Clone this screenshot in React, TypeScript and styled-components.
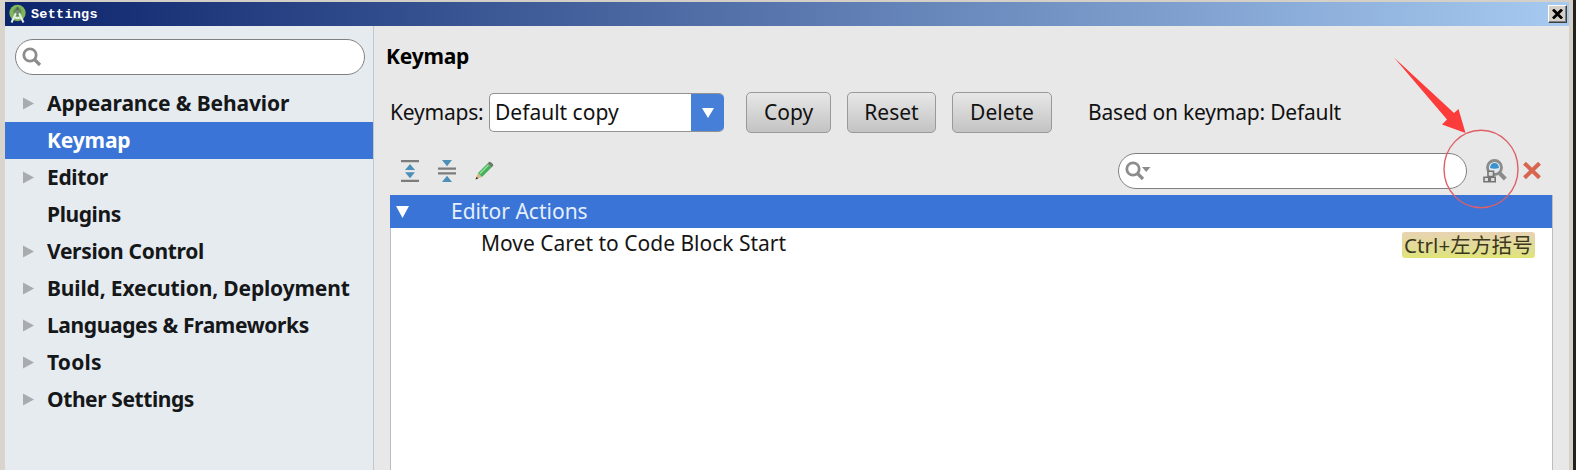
import React from "react";
import styled, { createGlobalStyle } from "styled-components";

const GlobalStyle = createGlobalStyle`
  *, *::before, *::after { box-sizing: border-box; }
  body { margin: 0; overflow: hidden; }
`;

const Frame = styled.div`
  width: 1576px;
  height: 470px;
  display: flex;
  flex-direction: column;
  padding-top: 2px;
  border-left: 5px solid #d9d5cc;
  border-right: 3px solid #24201e;
  background: #d4d0c8;
  font-family: "Noto Sans", "Noto Sans CJK SC", sans-serif;
  font-size: 21px;
  color: #111;
  position: relative;
  overflow: hidden;
`;

const TitleBar = styled.header`
  height: 24px;
  flex: none;
  margin-right: 4px;
  display: flex;
  align-items: center;
  padding: 0 2px 0 4px;
  background: linear-gradient(90deg, #0c246c 0%, #a6caf0 100%);
`;

const TitleText = styled.span`
  flex: 1;
  margin-left: 5px;
  padding-top: 1px;
  color: #fff;
  font: bold 13.5px/20px "Liberation Mono", monospace;
  letter-spacing: 0.25px;
`;

const CloseButton = styled.button`
  width: 19px;
  height: 18px;
  padding: 0;
  display: grid;
  place-items: center;
  background: #d4d0c8;
  border: 1px solid;
  border-color: #fff #404040 #404040 #fff;
  box-shadow: inset -1px -1px #808080;
`;

const Body = styled.div`
  flex: 1;
  min-height: 0;
  display: flex;
  margin-right: 4px;
  background: #e8e8e8;
`;

const Sidebar = styled.nav`
  width: 369px;
  flex: none;
  padding-top: 13px;
  background: #e6ebf0;
  border-right: 1px solid #c3c6ca;
`;

const SearchField = styled.div<{ $width: number }>`
  width: ${(p) => p.$width}px;
  height: 36px;
  display: flex;
  align-items: center;
  padding-left: 6px;
  background: #fff;
  border: 1.5px solid #808080;
  border-radius: 18px;
`;

const SidebarSearch = styled.div`
  padding-left: 10px;
  margin-bottom: 10.3px;
`;

const NavRow = styled.div<{ $active?: boolean; $spacing: number }>`
  height: 37.08px;
  display: flex;
  align-items: center;
  padding: 0 0 1.2px 17px;
  font-weight: 700;
  font-size: 21px;
  line-height: 35px;
  letter-spacing: ${(p) => p.$spacing}px;
  white-space: nowrap;
  color: ${(p) => (p.$active ? "#fff" : "#151719")};
  background: ${(p) => (p.$active ? "#3974d6" : "transparent")};
`;

const NavMarker = styled.span`
  width: 25px;
  display: flex;
`;

const Main = styled.main`
  flex: 1;
  min-width: 0;
  display: flex;
  flex-direction: column;
  padding: 13px 16px 0 13px;
`;

const Heading = styled.h1`
  margin: 0 0 0 -1px;
  height: 34px;
  font-size: 21px;
  line-height: 34px;
  font-weight: 700;
  letter-spacing: -0.2px;
  color: #000;
`;

const SchemeRow = styled.div`
  height: 41px;
  margin-top: 19px;
  display: flex;
  align-items: center;
`;

const Label = styled.span<{ $width: number; $spacing: number }>`
  width: ${(p) => p.$width}px;
  padding: 0 0 2px 3px;
  white-space: nowrap;
  line-height: 36px;
  letter-spacing: ${(p) => p.$spacing}px;
`;

const Combo = styled.div`
  width: 235px;
  height: 39px;
  margin-right: 22px;
  display: flex;
  border: 1px solid #929292;
  border-right: none;
  border-radius: 5px;
  background: #fff;
  overflow: hidden;
`;

const ComboValue = styled.span`
  flex: 1;
  padding-left: 5px;
  line-height: 37px;
`;

const ComboArrow = styled.span`
  width: 33px;
  margin: -1px 0;
  display: grid;
  place-items: center;
  background: #467fd8;
`;

const Button = styled.button<{ $width: number; $spacing?: number }>`
  width: ${(p) => p.$width}px;
  height: 41px;
  margin-right: 16px;
  padding: 0 0 2px;
  font: inherit;
  line-height: 36px;
  letter-spacing: ${(p) => p.$spacing ?? 0}px;
  color: #111;
  border: 1.5px solid #999;
  border-radius: 5px;
  background: linear-gradient(#e7e7e7, #c3c3c3);
`;

const Toolbar = styled.div`
  height: 62px;
  display: flex;
  align-items: center;
  padding: 13px 12px 0 14px;
`;

const ToolIcon = styled.span<{ $gap: number }>`
  display: flex;
  margin-right: ${(p) => p.$gap}px;
`;

const Spacer = styled.span`
  flex: 1;
`;

const ToolbarSearch = styled.div`
  margin-right: 16px;
  padding-top: 1px;
`;

const Tree = styled.div`
  flex: 1;
  margin-left: 3px;
  background: #fff;
  border: 1px solid #b9bec6;
  border-bottom: none;
`;

const TreeRow = styled.div<{ $selected?: boolean }>`
  height: 33px;
  display: flex;
  align-items: center;
  padding: 0 17px 0 ${(p) => (p.$selected ? 6 : 90)}px;
  margin: ${(p) => (p.$selected ? "-1px 0 0 -1px" : "0")};
  color: ${(p) => (p.$selected ? "#e6efff" : "#151515")};
  background: ${(p) => (p.$selected ? "#3974d6" : "#fff")};
`;

const TreeText = styled.span<{ $indent: number; $up?: boolean }>`
  flex: 1;
  margin-left: ${(p) => p.$indent}px;
  padding-bottom: ${(p) => (p.$up ? 2 : 0)}px;
  line-height: 31px;
`;

const Shortcut = styled.kbd`
  width: 133px;
  height: 26px;
  padding-left: 2px;
  font: 20.5px/26px "Noto Sans", "Noto Sans CJK SC", sans-serif;
  letter-spacing: 0.1px;
  white-space: nowrap;
  color: #3b371d;
  border-radius: 3px;
  background: linear-gradient(#e8d3b2, #dfe08a 80%, #e3e576);
`;

const Annotation = styled.svg`
  position: absolute;
  left: 1380px;
  top: 50px;
`;

const Chevron = () => (
  <svg width="12" height="13" viewBox="0 0 12 13">
    <path d="M1 0.5 12 6.5 1 12.5Z" fill="#a9acae" />
  </svg>
);

const DownTriangle = ({ w, h }: { w: number; h: number }) => (
  <svg width={w} height={h} viewBox="0 0 12 12" preserveAspectRatio="none">
    <path d="M0 0H12L6 12Z" fill="#fff" />
  </svg>
);

const Magnifier = ({ menu }: { menu?: boolean }) => (
  <svg width="28" height="20" viewBox="0 0 28 20" fill="none" stroke="#8c8c8c">
    <circle cx="8" cy="8" r="6.2" strokeWidth="2.8" />
    <path d="M12.5 12.5 18 18" strokeWidth="3.2" />
    {menu && <path d="M17 6H25.5L21.2 11Z" fill="#8c8c8c" stroke="none" />}
  </svg>
);

const AppLogo = () => (
  <svg width="17" height="20" viewBox="0 0 17 20">
    <circle cx="8.5" cy="9" r="8.2" fill="#7eb65a" />
    <circle cx="8.5" cy="8" r="4" fill="#5f8c55" />
    <path d="M8.5 3V7" stroke="#536158" strokeWidth="2" />
    <path d="M7 9 2.5 18.5M10 9 14.5 18.5M4.5 12.5Q8.5 16 12.5 12.5" fill="none" stroke="#e4ece5" strokeWidth="2" />
    <circle cx="8.5" cy="8" r="2" fill="#798a7a" />
  </svg>
);

const ExpandAll = () => (
  <svg width="18" height="22" viewBox="0 0 18 22">
    <path d="M0 1.2H18M0 20.8H18" stroke="#7c7c7c" strokeWidth="2.2" />
    <path d="M9 4 14 10H4ZM9 18.3 14 12.3H4Z" fill="#4e8fb7" />
  </svg>
);

const CollapseAll = () => (
  <svg width="18" height="22" viewBox="0 0 18 22">
    <path d="M0 8.6H18M0 13.4H18" stroke="#7c7c7c" strokeWidth="2.2" />
    <path d="M4 0H14L9 6.2ZM4 22H14L9 15.8Z" fill="#4e8fb7" />
  </svg>
);

const Pencil = () => (
  <svg width="19" height="19" viewBox="0 0 19 19">
    <path d="M0.5 18.5 3 12 7 16Z" fill="#d9b989" />
    <path d="M0.5 18.5 1.5 15.8 3.3 17.5Z" fill="#333" />
    <path d="M3 12 12.5 2.5 16.5 6.5 7 16Z" fill="#44b05c" />
    <path d="M4.3 12 12.8 3.5 14 4.7 5.5 13.2Z" fill="#8bdd91" />
    <path d="M12.5 2.5 14 1Q15 .3 16 1.2L18 3.2Q18.7 4 18 5L16.5 6.5Z" fill="#6c7a68" />
  </svg>
);

const FindByShortcut = () => (
  <svg width="24" height="24" viewBox="0 0 24 24" fill="none">
    <circle cx="11.5" cy="8.5" r="7" fill="#dfe9ef" stroke="#8b8b8b" strokeWidth="2.8" />
    <path d="M7 9Q7.5 4 11.5 4T16 9Q11.5 10.5 7 9Z" fill="#3c92cc" />
    <path d="M16 13.5 22.3 20" stroke="#8b8b8b" strokeWidth="4" />
    <path d="M5 12.2H10.5V17.5H5ZM1 18.3H5.8V22.8H1ZM7.3 18.3H12.2V22.8H7.3Z" fill="#dedede" stroke="#747474" strokeWidth="1.6" />
  </svg>
);

const RedCross = () => (
  <svg width="18" height="17" viewBox="0 0 18 17">
    <path d="M1.5 1.2 16.5 15.8M16.5 1.2 1.5 15.8" stroke="#d8654f" strokeWidth="4" />
  </svg>
);

const sections = [
  { name: "Appearance & Behavior", children: true, spacing: -0.13 },
  { name: "Keymap", active: true, spacing: -0.15 },
  { name: "Editor", children: true, spacing: -0.35 },
  { name: "Plugins", spacing: -0.4 },
  { name: "Version Control", children: true, spacing: -0.33 },
  { name: "Build, Execution, Deployment", children: true, spacing: -0.15 },
  { name: "Languages & Frameworks", children: true, spacing: -0.38 },
  { name: "Tools", children: true, spacing: 0.2 },
  { name: "Other Settings", children: true, spacing: -0.42 },
];

export default function App() {
  return (
    <>
      <GlobalStyle />
      <Frame>
        <TitleBar>
          <AppLogo />
          <TitleText>Settings</TitleText>
          <CloseButton aria-label="Close">
            <svg width="11" height="10" viewBox="0 0 11 10">
              <path d="M1 .5 10 9.5M10 .5 1 9.5" stroke="#000" strokeWidth="2.8" />
            </svg>
          </CloseButton>
        </TitleBar>
        <Body>
          <Sidebar>
            <SidebarSearch>
              <SearchField $width={350}>
                <Magnifier />
              </SearchField>
            </SidebarSearch>
            {sections.map((s) => (
              <NavRow key={s.name} $active={s.active} $spacing={s.spacing}>
                <NavMarker>{s.children && <Chevron />}</NavMarker>
                <span>{s.name}</span>
              </NavRow>
            ))}
          </Sidebar>
          <Main>
            <Heading>Keymap</Heading>
            <SchemeRow>
              <Label $width={102} $spacing={-0.2}>Keymaps:</Label>
              <Combo>
                <ComboValue>Default copy</ComboValue>
                <ComboArrow>
                  <DownTriangle w={12} h={10} />
                </ComboArrow>
              </Combo>
              <Button $width={85}>Copy</Button>
              <Button $width={89}>Reset</Button>
              <Button $width={100}>Delete</Button>
              <Spacer />
              <Label $width={468} $spacing={-0.2}>Based on keymap: Default</Label>
            </SchemeRow>
            <Toolbar>
              <ToolIcon $gap={19}>
                <ExpandAll />
              </ToolIcon>
              <ToolIcon $gap={19}>
                <CollapseAll />
              </ToolIcon>
              <ToolIcon $gap={0}>
                <Pencil />
              </ToolIcon>
              <Spacer />
              <ToolbarSearch>
                <SearchField $width={349}>
                  <Magnifier menu />
                </SearchField>
              </ToolbarSearch>
              <ToolIcon $gap={16}>
                <FindByShortcut />
              </ToolIcon>
              <ToolIcon $gap={0}>
                <RedCross />
              </ToolIcon>
            </Toolbar>
            <Tree>
              <TreeRow $selected>
                <DownTriangle w={13} h={12} />
                <TreeText $indent={42}>Editor Actions</TreeText>
              </TreeRow>
              <TreeRow>
                <TreeText $indent={0} $up>Move Caret to Code Block Start</TreeText>
                <Shortcut>Ctrl+左方括号</Shortcut>
              </TreeRow>
            </Tree>
          </Main>
        </Body>
        <Annotation width="140" height="165" viewBox="1385 50 140 165">
          <path d="M1394 57.5 1447 119.5 1442 124.5 1465.5 133 1458.5 109 1454 113Z" fill="#fc3b3b" />
          <ellipse cx="1481" cy="169" rx="37" ry="38.7" fill="none" stroke="#df5f66" strokeWidth="1.4" />
        </Annotation>
      </Frame>
    </>
  );
}
